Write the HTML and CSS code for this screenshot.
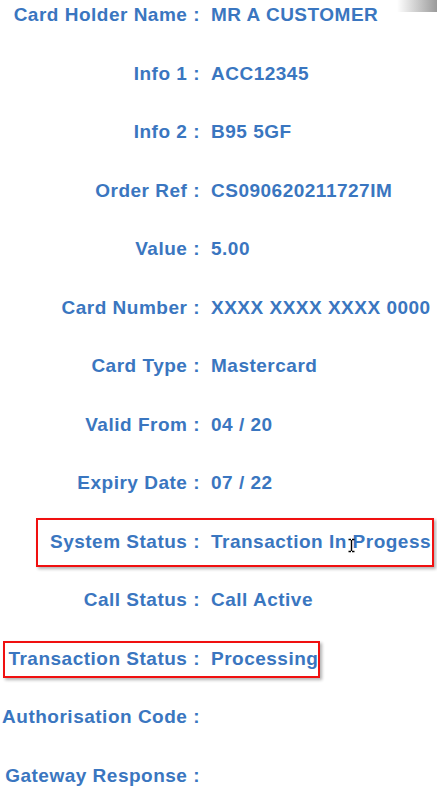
FILE: index.html
```html
<!DOCTYPE html>
<html lang="en">
<head>
<meta charset="utf-8">
<title>Transaction Details</title>
<link rel="stylesheet" href="styles.css">
</head>
<body>
<div class="page">
  <div class="corner-shade"></div>
  <dl class="details">
    <div class="row"><dt>Card Holder Name :</dt><dd>MR A CUSTOMER</dd></div>
    <div class="row"><dt>Info 1 :</dt><dd>ACC12345</dd></div>
    <div class="row"><dt>Info 2 :</dt><dd>B95 5GF</dd></div>
    <div class="row"><dt>Order Ref :</dt><dd>CS090620211727IM</dd></div>
    <div class="row"><dt>Value :</dt><dd>5.00</dd></div>
    <div class="row"><dt>Card Number :</dt><dd>XXXX XXXX XXXX 0000</dd></div>
    <div class="row"><dt>Card Type :</dt><dd>Mastercard</dd></div>
    <div class="row"><dt>Valid From :</dt><dd>04 / 20</dd></div>
    <div class="row"><dt>Expiry Date :</dt><dd>07 / 22</dd></div>
    <div class="row"><dt>System Status :</dt><dd>Transaction In Progess</dd></div>
    <div class="row"><dt>Call Status :</dt><dd>Call Active</dd></div>
    <div class="row"><dt>Transaction Status :</dt><dd>Processing</dd></div>
    <div class="row"><dt>Authorisation Code :</dt><dd></dd></div>
    <div class="row"><dt>Gateway Response :</dt><dd></dd></div>
  </dl>
  <div class="highlight highlight-system"></div>
  <div class="highlight highlight-transaction"></div>
  <svg class="cursor" width="9" height="15" viewBox="0 0 9 15" aria-hidden="true">
    <path d="M1.5 1.5h2.5M5 1.5h2.5M4.5 2v11M1.5 13.5h2.5M5 13.5h2.5" stroke="#000" stroke-width="1.4" fill="none"/>
  </svg>
</div>
</body>
</html>
```

FILE: styles.css
```css
* { box-sizing: border-box; }

html, body {
  margin: 0;
  padding: 0;
  background: #ffffff;
}

.page {
  position: relative;
  width: 437px;
  height: 794px;
  overflow: hidden;
  font-family: "Liberation Sans", Arial, sans-serif;
  font-weight: bold;
  font-size: 19px;
  letter-spacing: 0.5px;
  color: #3a76c0;
}

.details {
  margin: 0;
  padding: 0;
  display: flex;
  flex-direction: column;
  gap: 28.5px;
}

.row {
  display: grid;
  grid-template-columns: 200px 1fr;
  column-gap: 11px;
  height: 30px;
  line-height: 30px;
  white-space: nowrap;
}

.row dt {
  text-align: right;
  margin: 0;
}

.row dd {
  margin: 0;
}

.corner-shade {
  position: absolute;
  top: 0;
  right: 0;
  width: 40px;
  height: 12px;
  background: linear-gradient(to right, rgba(255,255,255,0), #9a9a9a);
}

.highlight {
  position: absolute;
  border: 2px solid #f01010;
  box-shadow: 2px 2px 3px rgba(0, 0, 0, 0.3);
}

.highlight-system {
  left: 36px;
  top: 518px;
  width: 398px;
  height: 49px;
}

.highlight-transaction {
  left: 3px;
  top: 641px;
  width: 317px;
  height: 37px;
}

.cursor {
  position: absolute;
  left: 347px;
  top: 538px;
}
```
